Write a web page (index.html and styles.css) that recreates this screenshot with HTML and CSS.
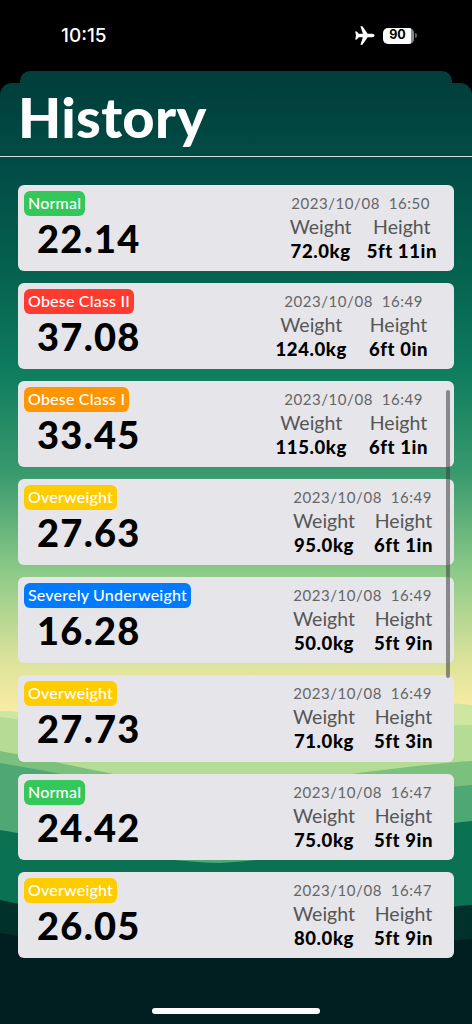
FILE: index.html
```html
<!DOCTYPE html>
<html lang="en">
<head>
<meta charset="utf-8">
<title>History</title>
<link rel="stylesheet" href="styles.css">
</head>
<body>
<div class="status">
  <span class="clock">10:15</span>
  <div class="status-right">
    <svg class="plane" viewBox="0 0 24 24" width="21" height="21"><path fill="#fff" d="M23.500 12c0-1.200-1.400-2-2.900-2h-5L9.700 1.500H7.300L10.200 10H5.400L3.300 7.500H1.300L2.400 12 1.300 16.500h2L5.400 14h4.800L7.300 22.500h2.400L15.600 14h5C22.100 14 23.500 13.200 23.500 12z"/></svg>
    <div class="battery"><span class="battery-level">90</span></div>
    <i class="battery-cap"></i>
  </div>
</div>
<div class="sheet-back"></div>
<main class="sheet">
  <svg class="scenery" viewBox="0 0 472 941" preserveAspectRatio="none" aria-hidden="true">
    <defs>
      <linearGradient id="sky" x1="0" y1="0" x2="0" y2="1">
        <stop offset="0" stop-color="#003f3b"/>
        <stop offset="0.103" stop-color="#024f48"/>
        <stop offset="0.206" stop-color="#056350"/>
        <stop offset="0.31" stop-color="#0f7d5e"/>
        <stop offset="0.416" stop-color="#3a9a6e"/>
        <stop offset="0.522" stop-color="#8ecb88"/>
        <stop offset="0.613" stop-color="#dce29b"/>
        <stop offset="0.666" stop-color="#f8eca4"/>
        <stop offset="1" stop-color="#f8eca4"/>
      </linearGradient>
    </defs>
    <rect width="472" height="941" fill="url(#sky)"/>
    <path fill="#cfe6a0" d="M0 628C70 630 130 650 210 652C300 650 400 612 472 622V941H0Z"/>
    <path fill="#b4dc95" d="M0 634C60 640 110 672 190 670C280 668 400 640 472 642V941H0Z"/>
    <path fill="#7cc07e" d="M0 668C60 678 110 695 200 702C300 702 400 682 472 678V941H0Z"/>
    <path fill="#4ea873" d="M0 680C60 690 110 702 200 712C300 716 400 708 472 702V941H0Z"/>
    <path fill="#0a7252" d="M0 747C80 760 140 778 220 780C320 775 400 745 472 738V941H0Z"/>
    <path fill="#02312c" d="M0 817C90 835 160 860 240 868C330 860 410 825 472 822V941H0Z"/>
    <path fill="#011f20" d="M0 850C100 865 170 872 260 874C340 872 420 860 472 856V941H0Z"/>
  </svg>
  <header class="title-bar"><h1>History</h1></header>
  <div class="list">
    <article class="card wide">
      <div class="left"><span class="badge green">Normal</span><div class="bmi">22.14</div></div>
      <div class="right"><div class="date">2023/10/08&nbsp;&nbsp;16:50</div>
        <div class="stats"><div class="stat"><span>Weight</span><b>72.0kg</b></div><div class="stat"><span>Height</span><b>5ft 11in</b></div></div></div>
    </article>
    <article class="card long">
      <div class="left"><span class="badge red">Obese Class II</span><div class="bmi">37.08</div></div>
      <div class="right"><div class="date">2023/10/08&nbsp;&nbsp;16:49</div>
        <div class="stats"><div class="stat"><span>Weight</span><b>124.0kg</b></div><div class="stat"><span>Height</span><b>6ft 0in</b></div></div></div>
    </article>
    <article class="card long">
      <div class="left"><span class="badge orange">Obese Class I</span><div class="bmi">33.45</div></div>
      <div class="right"><div class="date">2023/10/08&nbsp;&nbsp;16:49</div>
        <div class="stats"><div class="stat"><span>Weight</span><b>115.0kg</b></div><div class="stat"><span>Height</span><b>6ft 1in</b></div></div></div>
    </article>
    <article class="card">
      <div class="left"><span class="badge yellow">Overweight</span><div class="bmi">27.63</div></div>
      <div class="right"><div class="date">2023/10/08&nbsp;&nbsp;16:49</div>
        <div class="stats"><div class="stat"><span>Weight</span><b>95.0kg</b></div><div class="stat"><span>Height</span><b>6ft 1in</b></div></div></div>
    </article>
    <article class="card">
      <div class="left"><span class="badge blue">Severely Underweight</span><div class="bmi">16.28</div></div>
      <div class="right"><div class="date">2023/10/08&nbsp;&nbsp;16:49</div>
        <div class="stats"><div class="stat"><span>Weight</span><b>50.0kg</b></div><div class="stat"><span>Height</span><b>5ft 9in</b></div></div></div>
    </article>
    <article class="card">
      <div class="left"><span class="badge yellow">Overweight</span><div class="bmi">27.73</div></div>
      <div class="right"><div class="date">2023/10/08&nbsp;&nbsp;16:49</div>
        <div class="stats"><div class="stat"><span>Weight</span><b>71.0kg</b></div><div class="stat"><span>Height</span><b>5ft 3in</b></div></div></div>
    </article>
    <article class="card">
      <div class="left"><span class="badge green">Normal</span><div class="bmi">24.42</div></div>
      <div class="right"><div class="date">2023/10/08&nbsp;&nbsp;16:47</div>
        <div class="stats"><div class="stat"><span>Weight</span><b>75.0kg</b></div><div class="stat"><span>Height</span><b>5ft 9in</b></div></div></div>
    </article>
    <article class="card">
      <div class="left"><span class="badge yellow">Overweight</span><div class="bmi">26.05</div></div>
      <div class="right"><div class="date">2023/10/08&nbsp;&nbsp;16:47</div>
        <div class="stats"><div class="stat"><span>Weight</span><b>80.0kg</b></div><div class="stat"><span>Height</span><b>5ft 9in</b></div></div></div>
    </article>
  </div>
  <div class="scrollbar"></div>
  <div class="home"></div>
</main>
</body>
</html>
```
FILE: styles.css
```css
* { box-sizing: border-box; }
html, body { margin: 0; height: 1024px; overflow: hidden; background: #000; }
body { font-family: Lato, "Noto Sans", sans-serif; position: relative; }

.status { height: 71px; display: flex; justify-content: space-between; align-items: flex-start; padding: 23px 0 0 61px; color: #fff; }
.clock { font-family: Inter, sans-serif; font-size: 19px; font-weight: 500; line-height: 25px; }
.status-right { display: flex; align-items: center; margin-right: 55px; height: 25px; }
.plane { margin-right: 8px; }
.battery { width: 31px; height: 16px; border-radius: 5px; background: linear-gradient(90deg, #fff 90%, #8a8a8a 90%); display: flex; align-items: center; justify-content: center; }
.battery-level { font-family: Inter, sans-serif; font-size: 12.5px; font-weight: 700; color: #000; line-height: 1; padding-right: 2px; }
.battery-cap { width: 2px; height: 5px; background: #666; border-radius: 0 2px 2px 0; margin-left: 1px; }

.sheet-back { height: 30px; margin: 0 20px; background: #023f3b; border-radius: 10px 10px 0 0; }
.sheet { position: absolute; left: 0; right: 0; top: 83px; height: 941px; border-radius: 12px 12px 0 0; overflow: hidden; }
.scenery { position: absolute; inset: 0; width: 100%; height: 100%; }

.title-bar { position: relative; height: 74px; border-bottom: 1.5px solid #d5dcd9; padding-left: 18px; }
h1 { margin: 0; color: #fff; font-size: 56px; font-weight: 900; line-height: 68px; letter-spacing: .3px; }

.list { position: relative; display: flex; flex-direction: column; gap: 12px; padding: 28px 18px 0; }
.card { height: 86.1px; background: #e5e5ea; border-radius: 6px; display: flex; justify-content: space-between; padding: 6px 21px 0 6px; }
.card.long { padding-right: 26px; }
.card.wide { padding-right: 17px; }
.left { display: flex; flex-direction: column; align-items: flex-start; }
.badge { color: #fff; font-size: 16px; font-weight: 500; line-height: 23px; height: 25px; padding: 0 4px; border-radius: 6px; letter-spacing: .2px; }
.green { background: #34c759; }
.red { background: #ff3b30; }
.orange { background: #ff9500; }
.yellow { background: #ffcc00; }
.blue { background: #007aff; }
.bmi { font-size: 38px; font-weight: 900; color: #000; line-height: 44px; margin: 0 0 0 13px; letter-spacing: 1.3px; }
.right { display: flex; flex-direction: column; align-items: flex-end; }
.date { color: #666; font-size: 15px; line-height: 24px; letter-spacing: .55px; margin-right: 1px; }
.card.long .date { margin-right: 5px; }
.card.wide .date { margin-right: 7px; }
.stats { display: flex; gap: 19px; }
.card.long .stats { gap: 22px; }
.card.wide .stats { gap: 15px; }
.stat { display: flex; flex-direction: column; align-items: center; }
.stat span { color: #555; font-size: 19.5px; line-height: 24px; }
.stat b { color: #000; font-size: 18.5px; font-weight: 900; line-height: 25px; letter-spacing: .6px; }

.scrollbar { position: absolute; left: 446px; top: 307px; width: 4px; height: 288px; border-radius: 2px; background: rgba(60, 60, 60, .55); }
.home { position: absolute; left: 152px; top: 925px; width: 168px; height: 6px; border-radius: 3px; background: #fff; }
```
